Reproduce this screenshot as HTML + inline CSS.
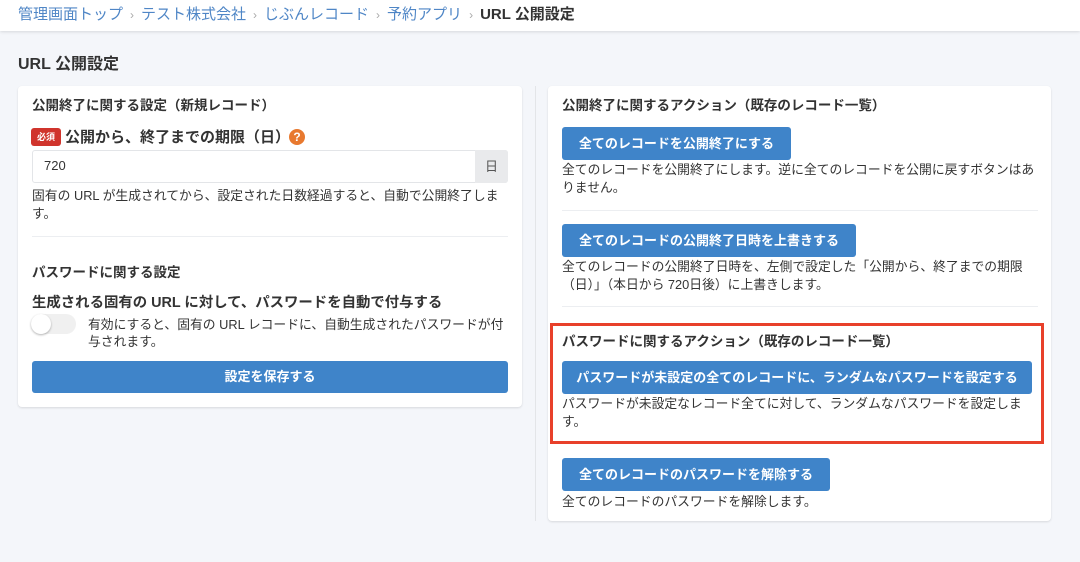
<!DOCTYPE html>
<html><head><meta charset="utf-8"><style>
*{box-sizing:border-box;margin:0;padding:0}
body{width:1080px;height:562px;background:#f4f6fa;font-family:"Liberation Sans","Noto Sans CJK JP",sans-serif;color:#333;position:relative;overflow:hidden;font-size:13px}
.a{position:absolute;white-space:nowrap}
.hdr{position:absolute;left:0;top:0;width:1080px;height:31px;background:#fff;box-shadow:0 1px 3px rgba(0,0,0,.12)}
.bc{left:18px;top:3px;font-size:15px;color:#4f86c6}
.bc .s{color:#aaa;font-size:12px;margin:0 7px}
.bc b{color:#333}
.card{position:absolute;background:#fff;border-radius:4px;box-shadow:0 1px 2px rgba(0,0,0,.12)}
.h{font-size:13.5px;font-weight:bold}
.btn{position:absolute;background:#3f84c9;color:#fff;border-radius:3px;font-weight:bold;font-size:13px;text-align:center;white-space:nowrap}
.t{font-size:12.8px;color:#333}
.hr{position:absolute;height:1px;background:#eceef1}
</style></head><body>
<div class="hdr"></div>
<div class="a bc">管理画面トップ<span class="s">›</span>テスト株式会社<span class="s">›</span>じぶんレコード<span class="s">›</span>予約アプリ<span class="s">›</span><b>URL 公開設定</b></div>
<div class="a" style="left:18px;top:50px;font-size:16px;font-weight:bold">URL 公開設定</div>

<div class="card" style="left:18px;top:86px;width:504px;height:321px"></div>
<div class="a h" style="left:32px;top:94px">公開終了に関する設定（新規レコード）</div>
<div class="a" style="left:31px;top:128px;width:30px;height:18px;background:#d0342c;border-radius:3px;color:#fff;font-size:9px;font-weight:bold;text-align:center;line-height:18px">必須</div>
<div class="a" style="left:65px;top:126px;font-size:15px;font-weight:bold">公開から、終了までの期限（日）</div>
<div class="a" style="left:289px;top:129px;width:16px;height:16px;border-radius:50%;background:#e8792f;color:#fff;font-size:12px;font-weight:bold;text-align:center;line-height:16px">?</div>
<div class="a" style="left:32px;top:150px;width:476px;height:33px;border:1px solid #e3e5e8;border-radius:3px"></div>
<div class="a" style="left:475px;top:150px;width:33px;height:33px;background:#e9eaec;border-radius:0 3px 3px 0;text-align:center;line-height:33px;font-size:13px;color:#555">日</div>
<div class="a" style="left:44px;top:158px;font-size:13px">720</div>
<div class="a t" style="left:32px;top:187px;line-height:18px">固有の URL が生成されてから、設定された日数経過すると、自動で公開終了しま<br>す。</div>
<div class="hr" style="left:32px;top:236px;width:476px"></div>
<div class="a h" style="left:32px;top:261px">パスワードに関する設定</div>
<div class="a" style="left:32px;top:291px;font-size:14.4px;font-weight:bold">生成される固有の URL に対して、パスワードを自動で付与する</div>
<div class="a" style="left:31px;top:314px;width:45px;height:20px;border-radius:10px;background:#f0f0f0"></div>
<div class="a" style="left:31px;top:314px;width:20px;height:20px;border-radius:50%;background:#fff;box-shadow:0 1px 2px rgba(0,0,0,.3)"></div>
<div class="a t" style="left:88px;top:316px;line-height:17px">有効にすると、固有の URL レコードに、自動生成されたパスワードが付<br>与されます。</div>
<div class="btn" style="left:32px;top:361px;width:476px;height:32px;line-height:32px">設定を保存する</div>

<div class="a" style="left:535px;top:86px;width:1px;height:435px;background:#e3e5e8"></div>

<div class="card" style="left:548px;top:86px;width:503px;height:435px"></div>
<div class="a h" style="left:562px;top:94px">公開終了に関するアクション（既存のレコード一覧）</div>
<div class="btn" style="left:562px;top:127px;width:229px;height:33px;line-height:33px">全てのレコードを公開終了にする</div>
<div class="a t" style="left:562px;top:161px;line-height:18px">全てのレコードを公開終了にします。逆に全てのレコードを公開に戻すボタンはあ<br>りません。</div>
<div class="hr" style="left:562px;top:210px;width:476px"></div>
<div class="btn" style="left:562px;top:224px;width:294px;height:33px;line-height:33px">全てのレコードの公開終了日時を上書きする</div>
<div class="a t" style="left:562px;top:258px;line-height:18px">全てのレコードの公開終了日時を、左側で設定した「公開から、終了までの期限<br>（日）」（本日から 720日後）に上書きします。</div>
<div class="hr" style="left:562px;top:306px;width:476px"></div>
<div class="a" style="left:550px;top:323px;width:494px;height:121px;border:3px solid #e8402a"></div>
<div class="a h" style="left:562px;top:330px">パスワードに関するアクション（既存のレコード一覧）</div>
<div class="btn" style="left:562px;top:361px;width:470px;height:33px;line-height:33px">パスワードが未設定の全てのレコードに、ランダムなパスワードを設定する</div>
<div class="a t" style="left:562px;top:395px;line-height:18px">パスワードが未設定なレコード全てに対して、ランダムなパスワードを設定しま<br>す。</div>
<div class="btn" style="left:562px;top:458px;width:268px;height:33px;line-height:33px">全てのレコードのパスワードを解除する</div>
<div class="a t" style="left:562px;top:491px">全てのレコードのパスワードを解除します。</div>
</body></html>
